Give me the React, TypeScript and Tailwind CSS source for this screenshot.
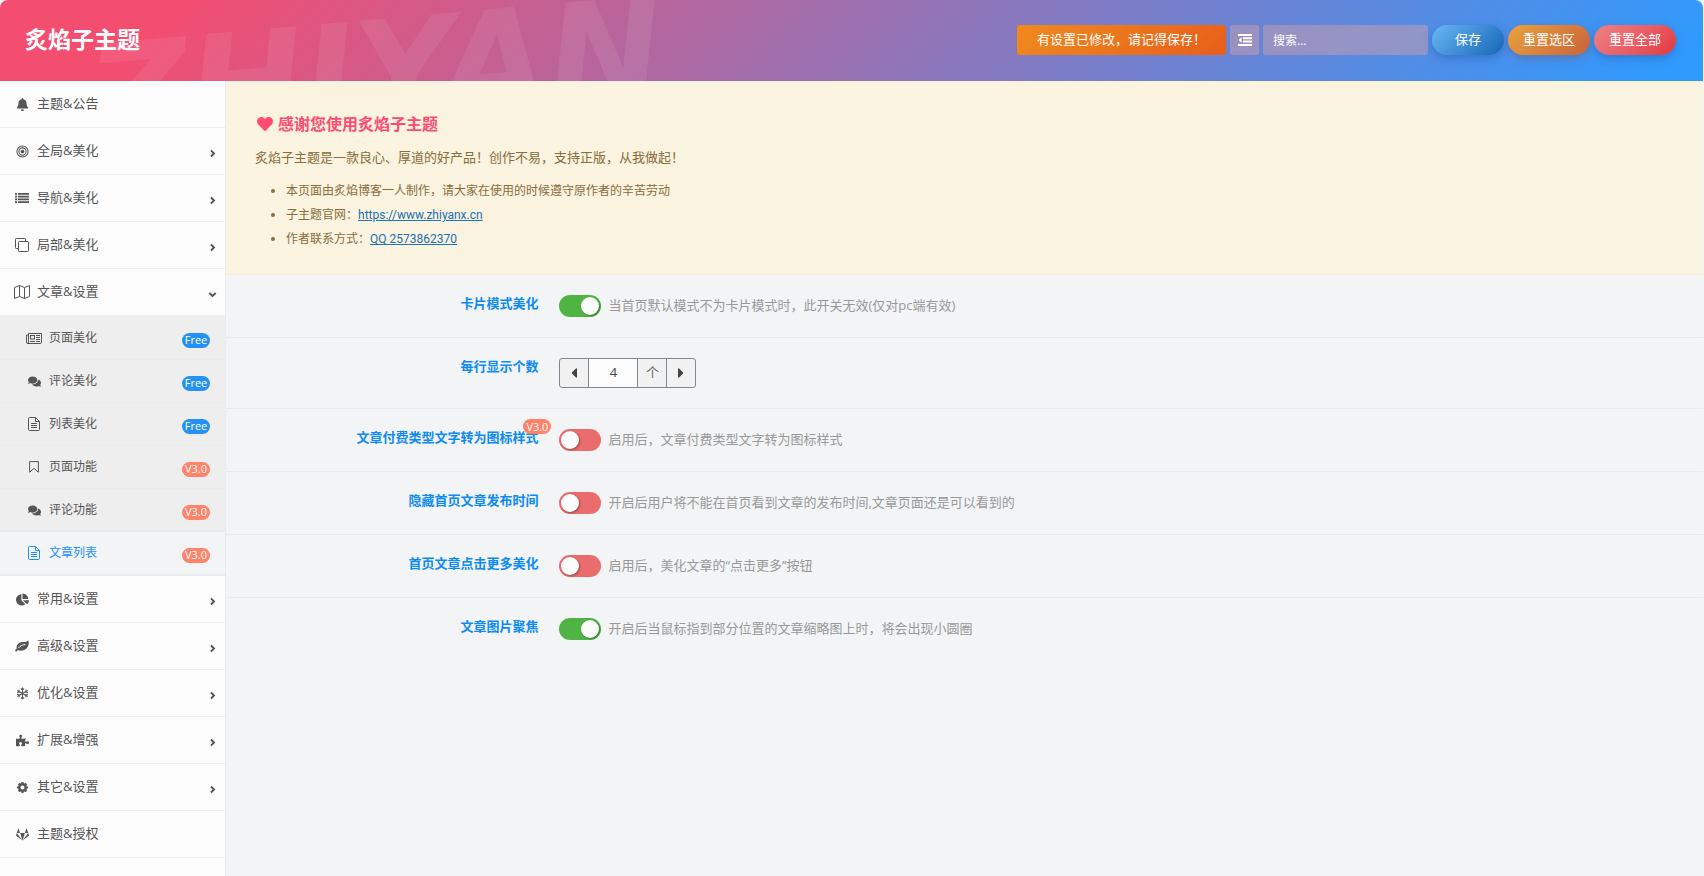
import { useState } from "react";
import type { ReactNode } from "react";
import {
  FaBell,
  FaComments,
  FaChartPie,
  FaPuzzlePiece,
  FaGitlab,
  FaHeart,
  FaCaretLeft,
  FaCaretRight,
} from "react-icons/fa";

const TargetIcon = () => (
  <svg viewBox="0 0 14 14" width="13" height="13" fill="none" stroke="currentColor">
    <circle cx="7" cy="7" r="6" strokeWidth="1.1" />
    <circle cx="7" cy="7" r="3.9" strokeWidth="1.1" />
    <circle cx="7" cy="7" r="2" fill="currentColor" stroke="none" />
  </svg>
);

const ListIcon = () => (
  <svg viewBox="0 0 14 10" width="14" height="10" fill="currentColor">
    <path d="M0 0h2v1.7H0zM3 0h11v1.7H3zM0 2.8h2v1.7H0zM3 2.8h11v1.7H3zM0 5.6h2v1.7H0zM3 5.6h11v1.7H3zM0 8.3h2V10H0zM3 8.3h11V10H3z" />
  </svg>
);

const CloneIcon = () => (
  <svg viewBox="0 0 14 14" width="14" height="14" fill="none" stroke="currentColor">
    <rect x="3.5" y="3.5" width="10" height="10" rx="0.8" />
    <path d="M3 10.5H1.3a.8.8 0 0 1-.8-.8V1.3a.8.8 0 0 1 .8-.8h8.4a.8.8 0 0 1 .8.8V3" />
  </svg>
);

const MapIcon = () => (
  <svg viewBox="0 0 16 14" width="16" height="14" fill="none" stroke="currentColor" strokeLinejoin="round">
    <path d="M.5 2.5l5-2 5 2 5-2v11l-5 2-5-2-5 2z" />
    <path d="M5.5.5v11M10.5 2.5v11" />
  </svg>
);

const NewsIcon = () => (
  <svg viewBox="0 0 16 11" width="16" height="11" fill="none" stroke="currentColor">
    <path d="M2.5 2H.5v7a1.5 1.5 0 0 0 1.5 1.5h12.2a1.3 1.3 0 0 0 1.3-1.3V.5h-13V9a1.5 1.5 0 0 1-1.2 1.5" />
    <rect x="4.5" y="2.5" width="4" height="3.5" />
    <path d="M10 2.5h4M10 4.5h4M10 6.5h4M4 8.5h5M10 8.5h4" />
  </svg>
);

const FileIcon = () => (
  <svg viewBox="0 0 12 14" width="12" height="14" fill="none" stroke="currentColor" strokeLinejoin="round">
    <path d="M7.5.5h-6a1 1 0 0 0-1 1v11a1 1 0 0 0 1 1h9a1 1 0 0 0 1-1v-8zM7.5.5v4h4" />
    <path d="M3 6.5h6M3 8.5h6M3 10.5h6" />
  </svg>
);

const BookmarkIcon = () => (
  <svg viewBox="0 0 10 12" width="10" height="12" fill="none" stroke="currentColor" strokeLinejoin="round">
    <path d="M.6.6h8.8v10.6L5 7.4.6 11.2z" />
  </svg>
);

const LeafIcon = () => (
  <svg viewBox="0 0 14 12" width="14" height="12">
    <path
      fill="currentColor"
      d="M12.9.4C12.2 1.6 10.7 1.8 8 1.9 4.800 2 1.600 3.900 1.600 7.200c0 .5.1 1 .2 1.300C1.100 9.200.1 9.900.1 10.600c0 .4.5 1.100 1 1.100.6 0 1.200-1.100 1.800-1.700.9.500 1.900.8 3 .8 5 0 7.900-4 7.900-8 0-.9-.3-2.200-.9-2.400z"
    />
    <path d="M3.800 7.700C5.600 5.600 7.400 4.700 10 4.500" fill="none" stroke="#fcfcfc" strokeLinecap="round" />
  </svg>
);

const SnowIcon = () => (
  <svg viewBox="0 0 14 14" width="13" height="13" fill="none" stroke="currentColor" strokeWidth="1.1">
    <path d="M7 .6v12.800M1.400 3.800l11.200 6.400M12.600 3.800L1.400 10.200" />
    <path d="M5.200 1.600L7 3.300l1.800-1.700M5.200 12.400L7 10.700l1.800 1.700M1.200 6.200l2.500-.8-.6-2.500M12.800 7.800l-2.500.8.6 2.500M12.800 6.200l-2.500-.8.6-2.500M1.200 7.800l2.500.8-.6 2.500" />
  </svg>
);

const GearIcon = () => (
  <svg viewBox="0 0 14 14" width="13" height="13" fill="none" stroke="currentColor">
    <circle cx="7" cy="7" r="3.500" strokeWidth="2.600" />
    <path
      strokeWidth="2.400"
      d="M7 1v1.800M7 11.200V13M1 7h1.800M11.200 7H13M2.800 2.800L4 4M10 10l1.200 1.200M2.800 11.200L4 10M10 4l1.200-1.200"
    />
  </svg>
);

const OutdentIcon = () => (
  <svg viewBox="0 0 14 12" width="14" height="12" fill="currentColor">
    <path d="M0 0h14v2H0zM5 3.3h9v2H5zM5 6.6h9v2H5zM0 10h14v2H0zM3.6 3.2v5.6L.6 6z" />
  </svg>
);

const Angle = ({ open }: { open: boolean }) => (
  <svg viewBox="0 0 9 9" width="9" height="9" fill="none" stroke="currentColor" strokeWidth="1.9">
    <path d={open ? "M1.300 3l3.200 3 3.200-3" : "M3 1.500l3 3-3 3"} />
  </svg>
);

type Child = { title: string; icon: ReactNode; tag: "Free" | "V3.0" };
type Item = { title: string; icon: ReactNode; arrow?: boolean; children?: Child[] };

const menu: Item[] = [
  { title: "主题&公告", icon: <FaBell /> },
  { title: "全局&美化", icon: <TargetIcon />, arrow: true },
  { title: "导航&美化", icon: <ListIcon />, arrow: true },
  { title: "局部&美化", icon: <CloneIcon />, arrow: true },
  {
    title: "文章&设置",
    icon: <MapIcon />,
    arrow: true,
    children: [
      { title: "页面美化", icon: <NewsIcon />, tag: "Free" },
      { title: "评论美化", icon: <FaComments />, tag: "Free" },
      { title: "列表美化", icon: <FileIcon />, tag: "Free" },
      { title: "页面功能", icon: <BookmarkIcon />, tag: "V3.0" },
      { title: "评论功能", icon: <FaComments />, tag: "V3.0" },
      { title: "文章列表", icon: <FileIcon />, tag: "V3.0" },
    ],
  },
  { title: "常用&设置", icon: <FaChartPie />, arrow: true },
  { title: "高级&设置", icon: <LeafIcon />, arrow: true },
  { title: "优化&设置", icon: <SnowIcon />, arrow: true },
  { title: "扩展&增强", icon: <FaPuzzlePiece />, arrow: true },
  { title: "其它&设置", icon: <GearIcon />, arrow: true },
  { title: "主题&授权", icon: <FaGitlab /> },
];

const Tag = ({ text }: { text: "Free" | "V3.0" }) => (
  <span
    className={`flex h-[15px] w-7 items-center justify-center rounded-full text-[11px] font-normal text-white ${
      text === "Free" ? "bg-[#2591f5]" : "bg-[#ff8269]"
    }`}
  >
    {text}
  </span>
);

const Sidebar = () => {
  const [active, setActive] = useState("文章列表");
  const [open, setOpen] = useState("文章&设置");

  return (
    <nav className="w-[226px] shrink-0 border-r border-[#e8eaec] bg-[#fcfcfc] text-[13px] text-[#555]">
      <ul>
        {menu.map((item) => (
          <li key={item.title}>
            <a
              href="#"
              onClick={() => setOpen(open === item.title ? "" : item.title)}
              className="flex h-[47px] items-center border-b border-[#eee] pl-[14px] pr-2"
            >
              <span className="mr-[7px] flex w-4 justify-center">{item.icon}</span>
              <span className="flex-1">{item.title}</span>
              {item.arrow && (
                <span className="pt-1">
                  <Angle open={open === item.title} />
                </span>
              )}
            </a>
            {item.children && open === item.title && (
              <ul className="border-b border-t border-b-[#e8eaec] border-t-[#eee] bg-[#eee] text-xs">
                {item.children.map((child) => (
                  <li key={child.title}>
                    <a
                      href="#"
                      onClick={() => setActive(child.title)}
                      className={`flex h-[43px] items-center border-b border-[#ebebeb] pl-[26px] pr-[15px] ${
                        active === child.title ? "bg-[#f2f4f6] text-[#1e90ff]" : ""
                      }`}
                    >
                      <span className="mr-[7px] flex w-4 justify-center text-[13px]">{child.icon}</span>
                      <span className="flex-1">{child.title}</span>
                      <span className="pt-1">
                        <Tag text={child.tag} />
                      </span>
                    </a>
                  </li>
                ))}
              </ul>
            )}
          </li>
        ))}
      </ul>
    </nav>
  );
};

const Header = () => (
  <header className="relative flex h-[81px] items-center justify-between overflow-hidden rounded-t-lg bg-[linear-gradient(135deg,#f34d70_10%,#2f9bff_98%)] pb-px pl-[25px] pr-[27px]">
    <div
      aria-hidden="true"
      className="pointer-events-none absolute left-[88px] top-1 -rotate-5 select-none font-['DejaVu_Sans'] text-[138px] font-bold italic leading-none text-white/8"
    >
      ZHIYAN
    </div>
    <h1 className="relative pb-[2px] text-[23px] font-bold text-white">炙焰子主题</h1>
    <div className="relative flex items-center gap-1 text-[13px] text-white">
      <div className="flex h-[30px] items-center rounded-[3px] bg-linear-135 from-[#ee8a1e] to-[#e85d1b] px-5">
        有设置已修改，请记得保存！
      </div>
      <button
        type="button"
        aria-label="展开全部设置"
        className="flex h-[30px] w-[29px] items-center justify-center rounded-[3px] bg-[#c39cb0]/55"
      >
        <OutdentIcon />
      </button>
      <input
        type="text"
        aria-label="搜索"
        placeholder="搜索..."
        className="h-[30px] w-[165px] rounded-[3px] bg-[#c39cb0]/55 px-[10px] text-xs text-white placeholder-white outline-none"
      />
      <button
        type="button"
        className="h-[30px] w-[72px] rounded-full bg-linear-135 from-[#68b8f4] to-[#1266b8] shadow-[0_3px_8px_rgba(20,60,140,0.35)]"
      >
        保存
      </button>
      <button
        type="button"
        className="h-[30px] w-[82px] rounded-full bg-linear-135 from-[#e8a23e] to-[#c9623a] shadow-[0_3px_8px_rgba(130,70,80,0.4)]"
      >
        重置选区
      </button>
      <button
        type="button"
        className="h-[30px] w-[82px] rounded-full bg-linear-135 from-[#ee8088] to-[#e23640] shadow-[0_3px_8px_rgba(40,60,140,0.35)]"
      >
        重置全部
      </button>
    </div>
  </header>
);

const Notice = () => (
  <section className="border-b border-[#faebcc] bg-[#f9f3e0] px-[29px] pb-[23px] pt-[31px] text-[#8a6d3b]">
    <h2 className="flex items-center text-base font-bold leading-6 text-[#ff4b70]">
      <FaHeart className="ml-[2px] mr-[5px]" />
      感谢您使用炙焰子主题
    </h2>
    <p className="mt-[11px] text-[13px] leading-5">
      炙焰子主题是一款良心、厚道的好产品！创作不易，支持正版，从我做起！
    </p>
    <ul className="mt-3 list-disc pl-[31px] text-xs leading-6">
      <li>本页面由炙焰博客一人制作，请大家在使用的时候遵守原作者的辛苦劳动</li>
      <li>
        子主题官网：
        <a href="https://www.zhiyanx.cn" className="font-['Roboto'] text-[#2271b1] underline">
          https://www.zhiyanx.cn
        </a>
      </li>
      <li>
        作者联系方式：
        <a href="#" className="font-['Roboto'] text-[#2271b1] underline">
          QQ 2573862370
        </a>
      </li>
    </ul>
  </section>
);

const Field = ({
  title,
  id,
  tag,
  children,
}: {
  title: string;
  id: string;
  tag?: "V3.0";
  children: ReactNode;
}) => (
  <div className="flex border-b border-[#e7e9eb] px-[30px] py-5 last:border-b-0">
    <div className="w-1/5 shrink-0 pr-px text-right text-[13px] font-bold leading-4 text-[#0d8bf2]">
      <label htmlFor={id} className="relative">
        {title}
        {tag && (
          <span className="absolute -right-[13px] -top-[9px]">
            <Tag text={tag} />
          </span>
        )}
      </label>
    </div>
    <div className="ml-5 flex items-start">{children}</div>
  </div>
);

const SwitchField = ({
  title,
  id,
  tag,
  desc,
  on,
}: {
  title: string;
  id: string;
  tag?: "V3.0";
  desc: string;
  on: boolean;
}) => {
  const [checked, setChecked] = useState(on);

  return (
    <Field title={title} id={id} tag={tag}>
      <input
        id={id}
        type="checkbox"
        checked={checked}
        onChange={() => setChecked(!checked)}
        className="flex h-[22px] w-[42px] appearance-none items-center rounded-full bg-[#ea6c6c] px-[2px] before:size-[18px] before:rounded-full before:bg-[#fcfcfc] before:shadow-[1px_1px_2px_rgba(0,0,0,0.35)] before:content-[''] checked:justify-end checked:bg-[#4fb443]"
      />
      <span className="ml-[7px] text-[13px] leading-5 text-[#999]">{desc}</span>
    </Field>
  );
};

const CountField = () => {
  const [count, setCount] = useState(4);

  return (
    <Field title="每行显示个数" id="count">
      <div className="flex h-[30px] divide-x divide-[#7e8993] overflow-hidden rounded-[3px] border border-[#7e8993] bg-[#f1f1f1] text-[13px] text-[#444]">
        <button
          type="button"
          aria-label="减少"
          onClick={() => setCount(count - 1)}
          className="flex w-[29px] items-center justify-center text-base"
        >
          <FaCaretLeft />
        </button>
        <input
          id="count"
          type="text"
          value={count}
          onChange={(e) => setCount(Number(e.target.value) || 0)}
          className="w-[49px] bg-[#fcfcfc] text-center outline-none"
        />
        <span className="flex w-[29px] items-center justify-center text-[#666]">个</span>
        <button
          type="button"
          aria-label="增加"
          onClick={() => setCount(count + 1)}
          className="flex w-7 items-center justify-center text-base"
        >
          <FaCaretRight />
        </button>
      </div>
    </Field>
  );
};

const App = () => {
  return (
    <div className="flex min-h-screen flex-col bg-[#f2f4f6] pr-px font-['Open_Sans','Noto_Sans_CJK_SC',sans-serif]">
      <Header />
      <div className="flex flex-1">
        <Sidebar />
        <main className="min-w-0 flex-1">
          <Notice />
          <SwitchField
            id="card"
            title="卡片模式美化"
            desc="当首页默认模式不为卡片模式时，此开关无效(仅对pc端有效)"
            on={true}
          />
          <CountField />
          <SwitchField
            id="pay-icon"
            title="文章付费类型文字转为图标样式"
            tag="V3.0"
            desc="启用后，文章付费类型文字转为图标样式"
            on={false}
          />
          <SwitchField
            id="hide-time"
            title="隐藏首页文章发布时间"
            desc="开启后用户将不能在首页看到文章的发布时间,文章页面还是可以看到的"
            on={false}
          />
          <SwitchField
            id="more"
            title="首页文章点击更多美化"
            desc="启用后，美化文章的“点击更多”按钮"
            on={false}
          />
          <SwitchField
            id="focus"
            title="文章图片聚焦"
            desc="开启后当鼠标指到部分位置的文章缩略图上时，将会出现小圆圈"
            on={true}
          />
        </main>
      </div>
    </div>
  );
};

export default App;
